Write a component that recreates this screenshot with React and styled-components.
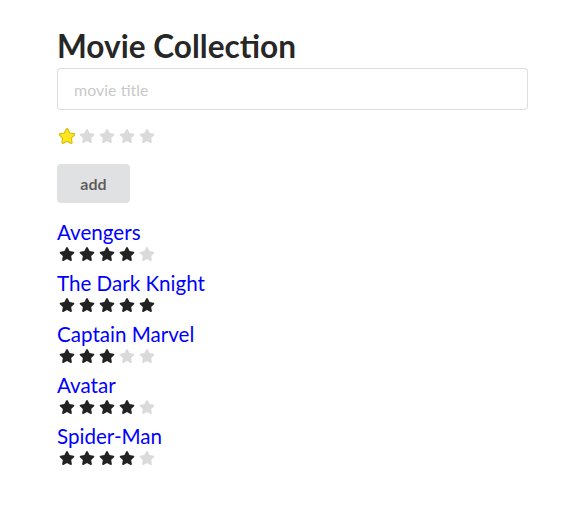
import React from "react";
import styled, { createGlobalStyle } from "styled-components";

const Global = createGlobalStyle`
  body {
    margin: 0;
    background: #ffffff;
    font-family: Lato, "Helvetica Neue", Arial, sans-serif;
    color: rgba(0, 0, 0, 0.87);
  }
`;

const Page = styled.div`
  width: 471px;
  margin: 0 auto;
  padding-top: 26px;
`;

const Title = styled.h1`
  margin: 0 0 1px;
  font-size: 31.6px;
  line-height: 41px;
  font-weight: 700;
  color: rgba(0, 0, 0, 0.87);
`;

const Input = styled.input`
  box-sizing: border-box;
  display: block;
  width: 100%;
  height: 42px;
  padding: 0 16px;
  font-family: Lato, sans-serif;
  font-size: 16px;
  border: 1px solid rgba(34, 36, 38, 0.15);
  border-radius: 4px;
  outline: none;
  color: rgba(0, 0, 0, 0.87);
  &::placeholder {
    color: rgba(191, 191, 191, 0.87);
  }
`;

const StarRow = styled.div`
  display: flex;
  height: 20px;
  align-items: center;
  margin-top: ${(p) => p.$top || 0}px;
`;

const StarBox = styled.span`
  width: 20px;
  height: 20px;
  box-sizing: border-box;
  padding-left: ${(p) => (p.$big ? 0.5 : 1.5)}px;
  display: flex;
  align-items: center;
  justify-content: flex-start;
`;

const Button = styled.button`
  margin-top: 18px;
  width: 73px;
  height: 39px;
  border: none;
  border-radius: 4px;
  background: #e0e1e2;
  color: rgba(0, 0, 0, 0.6);
  font-family: Lato, sans-serif;
  font-size: 16px;
  font-weight: 700;
  cursor: pointer;
  padding: 0;
`;

const List = styled.div`
  margin-top: 17px;
  display: flex;
  flex-direction: column;
  gap: 7px;
`;

const Item = styled.div`
  display: flex;
  flex-direction: column;
`;

const MovieLink = styled.a`
  font-size: 20.6px;
  line-height: 24px;
  font-weight: 400;
  color: #0000ff;
  text-decoration: none;
  align-self: flex-start;
`;

const STAR =
  "M259.3 17.8L194 150.2 47.9 171.5c-26.2 3.8-36.7 36.1-17.7 54.6l105.7 103-25 145.5c-4.5 26.3 23.2 46 46.4 33.7L288 439.6l130.7 68.7c23.2 12.2 50.9-7.4 46.4-33.7l-25-145.5 105.7-103c19-18.5 8.5-50.8-17.7-54.6L382 150.2 316.7 17.8c-11.7-23.6-45.6-23.9-57.4 0z";

const palette = {
  yellow: { fill: "#FFE623", stroke: "#D8BC06" },
  dark: { fill: "#222222", stroke: "none" },
  off: { fill: "#dadada", stroke: "none" },
};

function Star({ kind }) {
  const c = palette[kind];
  const big = kind === "yellow";
  return (
    <StarBox $big={big}>
      <svg
        width={big ? 18 : 16}
        height={big ? 16 : 14}
        viewBox={big ? "-24 -24 624 560" : "0 0 576 512"}
      >
        <path
          d={STAR}
          fill={c.fill}
          stroke={c.stroke}
          strokeWidth={big ? 40 : 0}
        />
      </svg>
    </StarBox>
  );
}

function Rating({ value, on, top }) {
  return (
    <StarRow $top={top}>
      {[1, 2, 3, 4, 5].map((i) => (
        <Star key={i} kind={i <= value ? on : "off"} />
      ))}
    </StarRow>
  );
}

const movies = [
  { title: "Avengers", rating: 4 },
  { title: "The Dark Knight", rating: 5 },
  { title: "Captain Marvel", rating: 3 },
  { title: "Avatar", rating: 4 },
  { title: "Spider-Man", rating: 4 },
];

export default function App() {
  return (
    <>
      <Global />
      <Page>
        <Title>Movie Collection</Title>
        <Input placeholder="movie title" />
        <Rating value={1} on="yellow" top={16} />
        <Button>add</Button>
        <List>
          {movies.map((m) => (
            <Item key={m.title}>
              <MovieLink href="#">{m.title}</MovieLink>
              <Rating value={m.rating} on="dark" />
            </Item>
          ))}
        </List>
      </Page>
    </>
  );
}
